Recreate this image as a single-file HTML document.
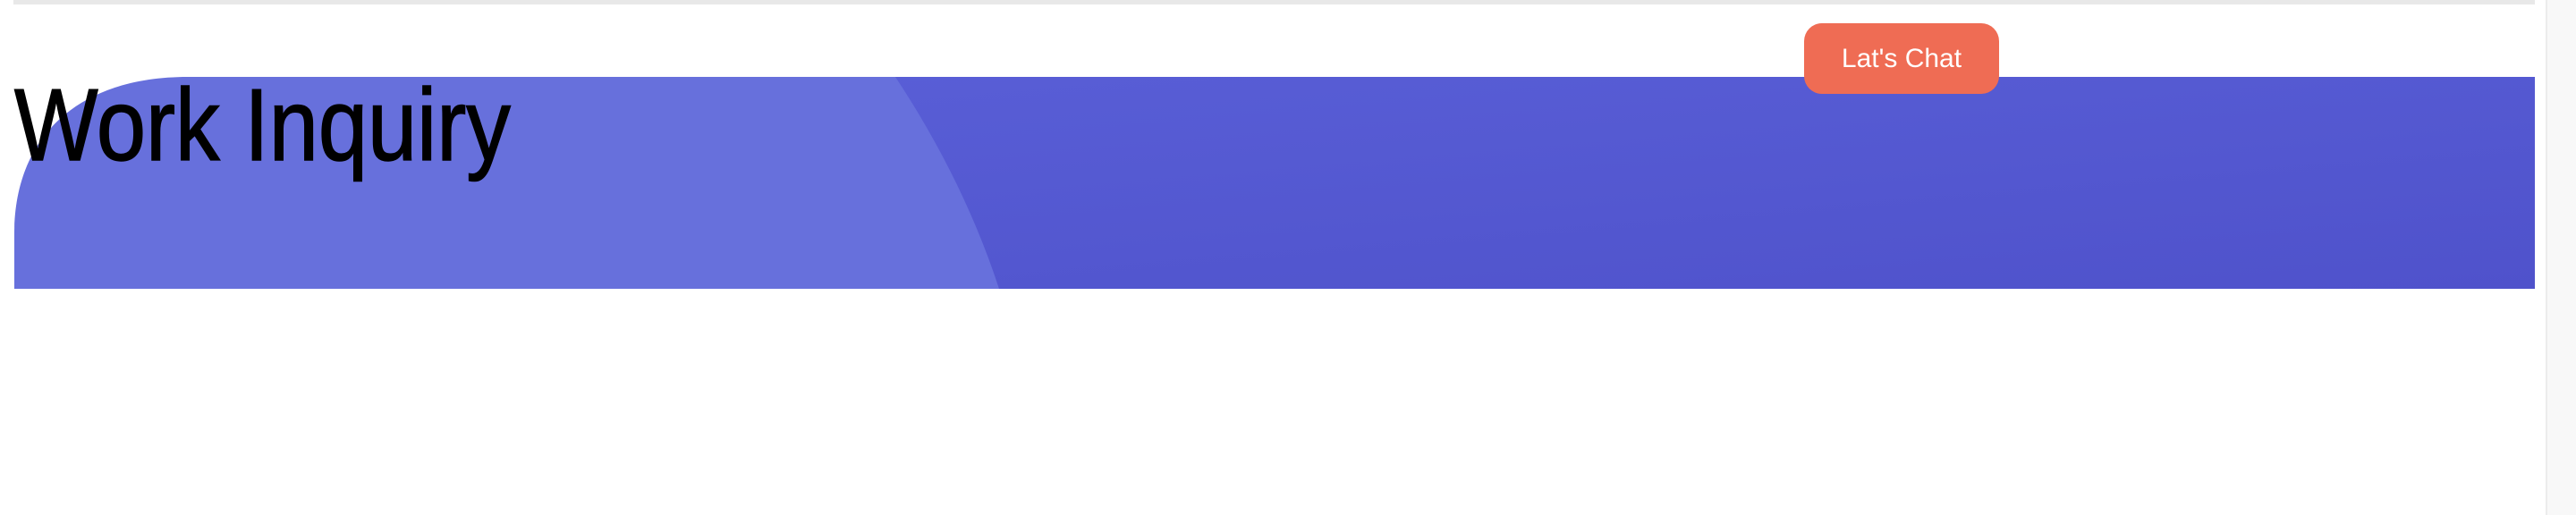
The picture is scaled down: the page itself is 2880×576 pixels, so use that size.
<!DOCTYPE html>
<html><head><style>
html,body{margin:0;padding:0;width:2880px;height:576px;overflow:hidden;background:#fff;font-family:"Liberation Sans",sans-serif}
.topbar{position:absolute;left:15px;top:0;width:2819px;height:5px;background:#e8e8e8}
.scroll{position:absolute;left:2846px;top:0;width:34px;height:576px;background:#f8f8f8;border-left:2px solid #ececec}
svg{position:absolute;left:0;top:0}
h1{position:absolute;left:16px;top:76px;margin:0;font-weight:normal;font-size:114px;line-height:130px;color:#000;transform:scaleX(0.87);transform-origin:left top;white-space:nowrap;-webkit-text-stroke:1.5px #000}
.btn{position:absolute;left:2017px;top:26px;width:218px;height:79px;background:#ef6c54;border-radius:20px;color:#fff;font-size:30px;line-height:79px;text-align:center}
</style></head><body>
<div class="topbar"></div>
<div class="scroll"></div>
<svg width="2880" height="576">
<defs>
<linearGradient id="g" x1="0" y1="0" x2="1" y2="1" gradientUnits="objectBoundingBox">
<stop offset="0" stop-color="#5a60d8"/><stop offset="1" stop-color="#4f52cb"/>
</linearGradient>
</defs>
<rect x="16" y="86" width="2818" height="237" fill="url(#g)"/>
<path d="M16,323 L16,262 C16,150 90,86 210,86 L1001,86 C1050,160 1090,240 1117,323 Z" fill="#6770dc"/>
<path d="M16,86 L210,86 C90,86 16,150 16,262 Z" fill="#fff"/>
</svg>
<h1>Work Inquiry</h1>
<div class="btn">Lat's Chat</div>
</body></html>
